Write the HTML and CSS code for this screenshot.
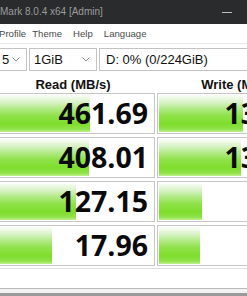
FILE: index.html
```html
<!DOCTYPE html>
<html lang="en">
<head>
    <meta charset="UTF-8">
    <meta name="viewport" content="width=device-width, initial-scale=1.0">
    <title>CrystalDiskMark 8.0.4 x64 [Admin]</title>
    <link rel="stylesheet" href="styles.css">
</head>
<body>
    <div class="titlebar">
        <span class="title">Mark 8.0.4 x64 [Admin]</span>
        <span class="minimize"></span>
    </div>

    <div class="menubar">
        <span class="menu-item first">Profile</span>
        <span class="menu-item">Theme</span>
        <span class="menu-item">Help</span>
        <span class="menu-item">Language</span>
    </div>

    <div class="main">
        <div class="toolbar">
            <div class="combo combo-count">
                <span>5</span>
                <svg class="chevron" width="8" height="5" viewBox="0 0 8 5"><polyline points="0.5,0.5 4,4 7.5,0.5" fill="none" stroke="#8a8a8a" stroke-width="1"/></svg>
            </div>
            <div class="combo combo-size">
                <span>1GiB</span>
                <svg class="chevron" width="8" height="5" viewBox="0 0 8 5"><polyline points="0.5,0.5 4,4 7.5,0.5" fill="none" stroke="#8a8a8a" stroke-width="1"/></svg>
            </div>
            <div class="combo combo-drive">
                <span>D: 0% (0/224GiB)</span>
            </div>
        </div>

        <div class="results">
            <div class="head">Read (MB/s)</div>
            <div class="head">Write (MB/s)</div>

            <div class="cell"><div class="bar" style="width: 97px"></div><span class="value">461.69</span></div>
            <div class="cell"><div class="bar" style="width: 84px"></div><span class="value">136.84</span></div>

            <div class="cell"><div class="bar" style="width: 96px"></div><span class="value">408.01</span></div>
            <div class="cell"><div class="bar" style="width: 82px"></div><span class="value">133.27</span></div>

            <div class="cell"><div class="bar" style="width: 83px"></div><span class="value">127.15</span></div>
            <div class="cell"><div class="bar" style="width: 43px"></div><span class="value">4.05</span></div>

            <div class="cell"><div class="bar" style="width: 59px"></div><span class="value">17.96</span></div>
            <div class="cell"><div class="bar" style="width: 41px"></div><span class="value">3.48</span></div>
        </div>

        <div class="comment"></div>
    </div>

    <div class="footer"></div>
</body>
</html>
```

FILE: styles.css
```css
body {
    margin: 0;
    width: 247px;
    height: 296px;
    overflow: hidden;
    background: #ffffff;
    font-family: "Liberation Sans", Arial, sans-serif;
}

/* window title */
.titlebar {
    height: 24px;
    background: #2a2b2d;
    display: flex;
    align-items: center;
    justify-content: space-between;
}
.title {
    font-size: 10px;
    color: #9c9c9c;
    margin-top: -2px;
}
.minimize {
    width: 10px;
    height: 1px;
    background: #bdbdbd;
    margin-right: 15px;
}

/* menu */
.menubar {
    height: 19px;
    border-bottom: 1px solid #e8e8e8;
    display: flex;
    align-items: center;
    font-size: 9.6px;
    color: #4a4a4a;
}
.menu-item {
    margin-right: 11px;
}
.menu-item.first {
    margin-left: -1px;
    margin-right: 6px;
}

.main {
    margin-left: -9px;
    width: 330px;
}

/* combo boxes */
.toolbar {
    display: flex;
    gap: 2px;
    margin-top: 4px;
}
.combo {
    height: 23px;
    box-sizing: border-box;
    border: 1px solid #c3c3c3;
    display: flex;
    align-items: center;
    justify-content: space-between;
    font-size: 13px;
    color: #111;
    padding: 0 6px 0 4px;
}
.combo-count {
    width: 36px;
    padding-left: 10px;
}
.combo-size {
    width: 68px;
}
.combo-drive {
    flex: 1;
    padding-left: 6px;
}
.chevron {
    display: block;
}

/* result grid */
.results {
    display: grid;
    grid-template-columns: 164px 164px;
    column-gap: 2px;
}
.head {
    height: 22px;
    box-sizing: border-box;
    padding-top: 6px;
    text-align: center;
    font-size: 13px;
    font-weight: bold;
    line-height: 16px;
    color: #111;
}
.cell {
    height: 41px;
    box-sizing: border-box;
    border: 1px solid #c6c6c6;
    padding: 1px;
    margin-bottom: 3px;
    display: grid;
    background: #fff;
}
.bar {
    grid-area: 1 / 1;
    height: 100%;
    background: linear-gradient(#fbfdf9 0%, #dcf3cd 18%, #b4eb8a 36%, #8fe24a 56%, #7edd2c 78%, #8fe248 92%, #bdf08f 100%);
}
.value {
    grid-area: 1 / 1;
    justify-self: end;
    align-self: center;
    padding-right: 5px;
    font-family: "Open Sans", "Liberation Sans", sans-serif;
    font-weight: 700;
    font-size: 28.5px;
    line-height: 1;
    color: #0a0a0a;
}

/* comment box */
.comment {
    margin-top: -1px;
    height: 21px;
    box-sizing: border-box;
    border-top: 1px solid #dedede;
    border-bottom: 1px solid #b8b8b8;
}

.footer {
    height: 8px;
    background: linear-gradient(#f2f2f2 0%, #f2f2f2 50%, #9a9a9a 50%, #9a9a9a 100%);
}
```
